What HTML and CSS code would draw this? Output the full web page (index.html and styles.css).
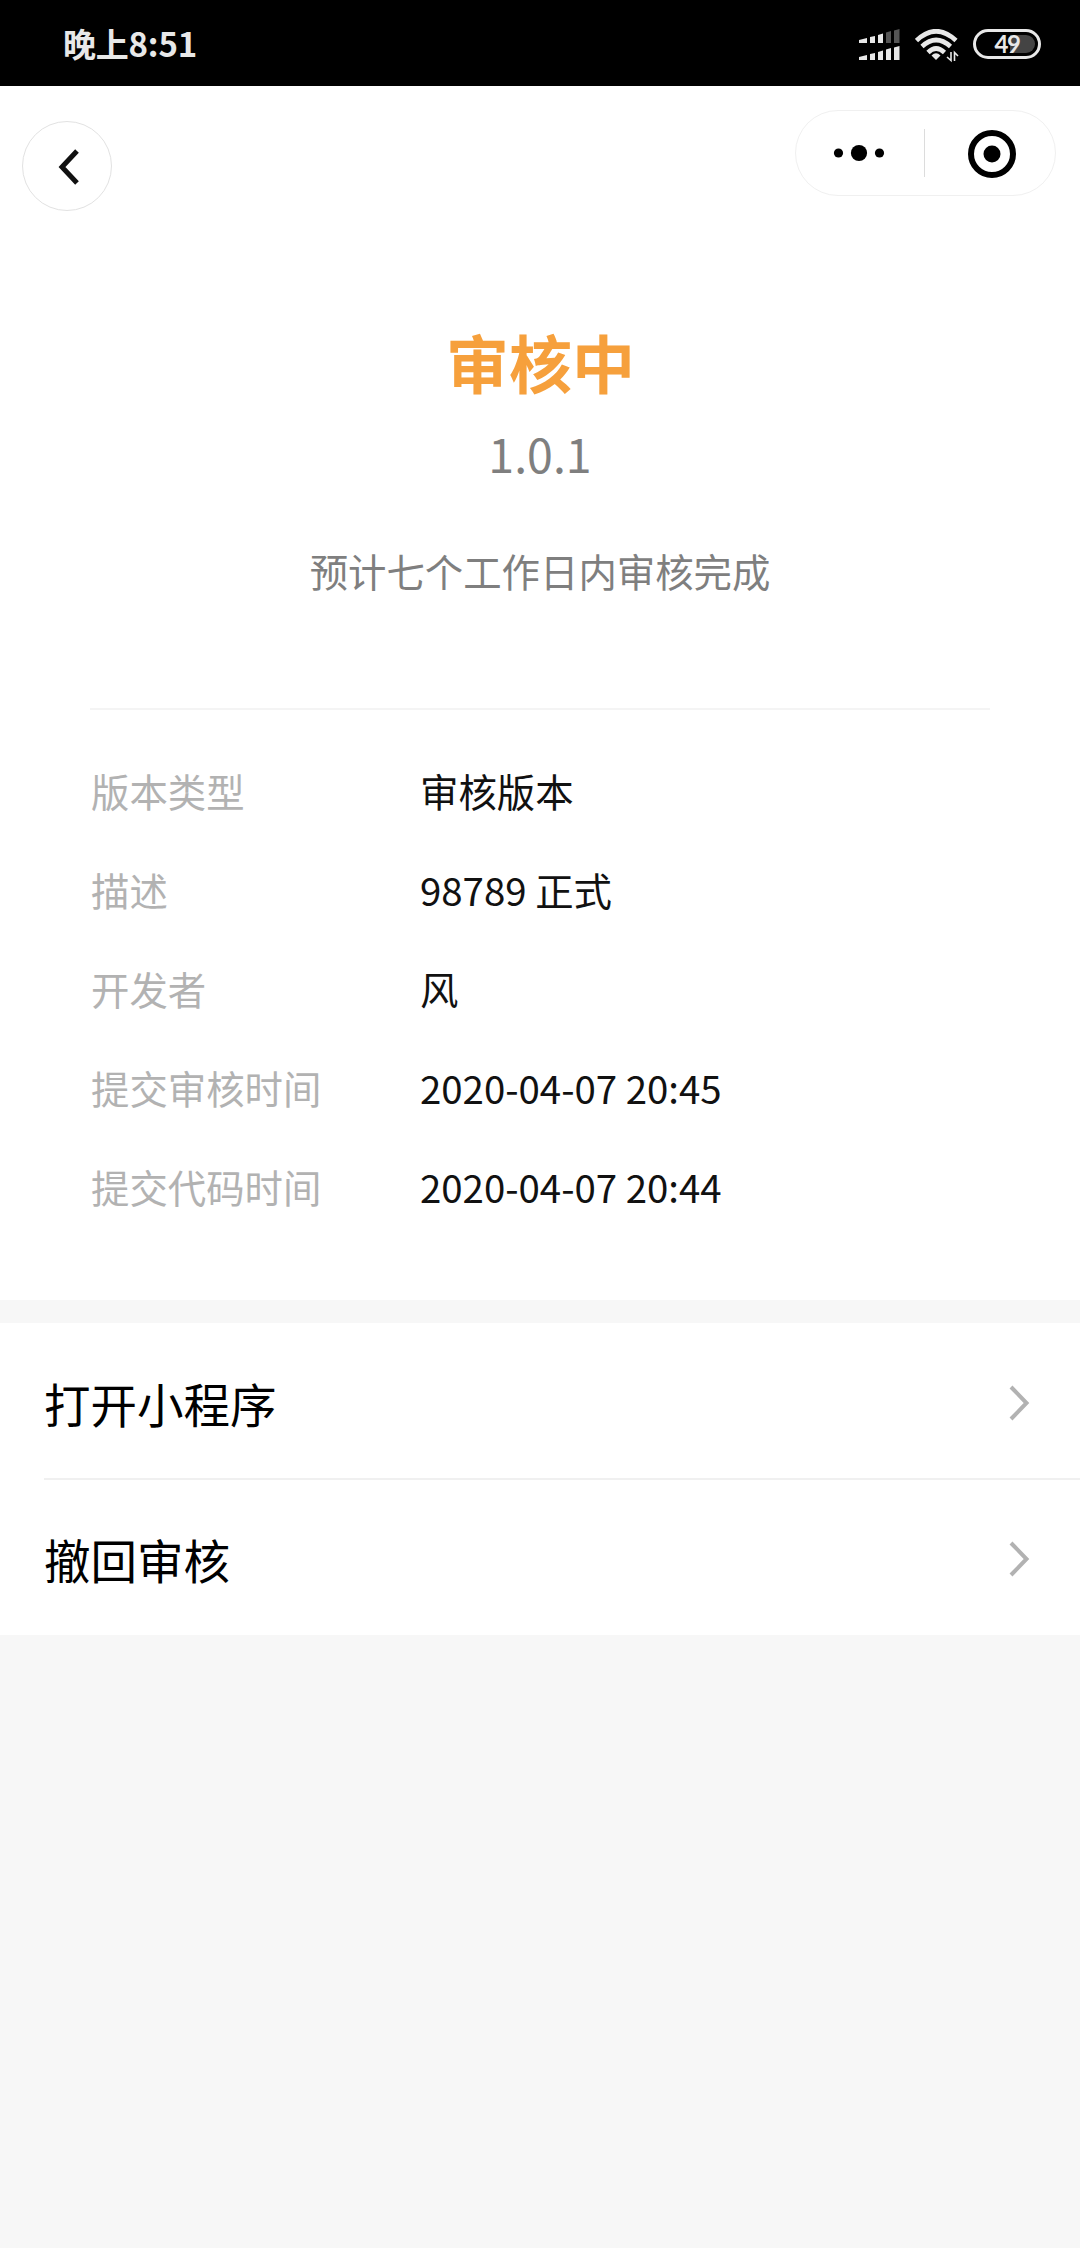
FILE: index.html
```html
<!DOCTYPE html>
<html lang="zh-CN">
<head>
  <meta charset="UTF-8" />
  <meta name="viewport" content="width=device-width, initial-scale=1.0"/>
  <title>审核中</title>
  <link rel="stylesheet" href="styles.css">
</head>
<body>
  <div class="status-bar">
    <div class="status-time">晚上8:51</div>
    <div class="status-icons">
      <svg class="signal" width="42" height="32" viewBox="0 0 42 32">
        <g fill="#e8e8e8">
          <path d="M0 11l8-2v5H0z"/>
          <path d="M11 8l5-1v7h-5z"/>
          <path d="M19 6l5-1.500v9.500h-5z"/>
        </g>
        <g fill="#555">
          <path d="M27 3.500l5-1.500v12h-5z"/>
          <path d="M35 1.500l5.500-1.500v14H35z"/>
        </g>
        <g fill="#e8e8e8">
          <path d="M0 28l8-2v5H0z"/>
          <path d="M11 25l5-1v7h-5z"/>
          <path d="M19 23l5-1.500v9.500h-5z"/>
          <path d="M27 20.500l5-1.500v12h-5z"/>
          <path d="M35 18.500l5.500-1.500v14H35z"/>
        </g>
      </svg>
      <svg class="wifi" width="44" height="34" viewBox="0 0 44 34">
        <g fill="none" stroke="#e8e8e8" stroke-width="4.600">
          <path d="M1.500 11.500Q21 -7 41 11.500"/>
          <path d="M7 17.500Q21 4.500 35.500 17.500"/>
          <path d="M13 23.500Q21 15.500 29.500 23.500"/>
        </g>
        <path d="M16.500 26.500Q21 22 25.500 26.500L21 31z" fill="#e8e8e8"/>
        <path d="M32 28l4 3.500V23M39.500 32v-8.500l3.500 3.500" fill="none" stroke="#e8e8e8" stroke-width="1.600"/>
      </svg>
      <div class="battery"><span>49</span></div>
    </div>
  </div>

  <div class="nav-bar">
    <div class="back">
      <svg width="22" height="38" viewBox="0 0 22 38">
        <path d="M19 3L4 19l15 16" fill="none" stroke="#111" stroke-width="5"/>
      </svg>
    </div>
    <div class="capsule">
      <div class="capsule-more">
        <svg width="52" height="18" viewBox="0 0 52 18">
          <circle cx="5.500" cy="9" r="4.600"/>
          <circle cx="26" cy="9" r="8.100"/>
          <circle cx="46.500" cy="9" r="4.600"/>
        </svg>
      </div>
      <div class="capsule-close">
        <svg width="48" height="48" viewBox="0 0 48 48">
          <circle cx="24" cy="24" r="21" fill="none" stroke="#000" stroke-width="6"/>
          <circle cx="24" cy="24" r="8.500"/>
        </svg>
      </div>
    </div>
  </div>

  <div class="summary">
    <h1>审核中</h1>
    <div class="version">1.0.1</div>
    <div class="tip">预计七个工作日内审核完成</div>
  </div>

  <div class="details">
    <div class="detail"><span class="label">版本类型</span><span>审核版本</span></div>
    <div class="detail"><span class="label">描述</span><span>98789 正式</span></div>
    <div class="detail"><span class="label">开发者</span><span>风</span></div>
    <div class="detail"><span class="label">提交审核时间</span><span>2020-04-07 20:45</span></div>
    <div class="detail"><span class="label">提交代码时间</span><span>2020-04-07 20:44</span></div>
  </div>

  <div class="actions">
    <div class="action">
      <span>打开小程序</span>
      <svg width="22" height="38" viewBox="0 0 22 38">
        <path d="M3 3L18.500 19 3 35" fill="none" stroke="#b2b2b2" stroke-width="4"/>
      </svg>
    </div>
    <div class="action">
      <span>撤回审核</span>
      <svg width="22" height="38" viewBox="0 0 22 38">
        <path d="M3 3L18.500 19 3 35" fill="none" stroke="#b2b2b2" stroke-width="4"/>
      </svg>
    </div>
  </div>
</body>
</html>
```
FILE: styles.css
```css
* {
  box-sizing: border-box;
}

body {
  margin: 0;
  min-height: 2248px;
  background: #f7f7f7;
  color: #111;
  font-family: "Noto Sans CJK SC", sans-serif;
}

svg {
  display: block;
}

/* status bar */
.status-bar {
  display: flex;
  justify-content: space-between;
  height: 86px;
  padding: 0 39px 0 63px;
  background: #000;
  color: #e8e8e8;
}

.status-time {
  font-size: 33px;
  font-weight: bold;
  line-height: 87px;
  letter-spacing: -0.2px;
}

.status-icons {
  display: flex;
  align-items: flex-start;
  padding-top: 29px;
}

.wifi {
  margin: 0 14px 0 14px;
}

.battery {
  width: 68px;
  height: 30px;
  border: 3px solid #e8e8e8;
  border-radius: 15px;
  padding: 3px;
}

.battery span {
  display: block;
  height: 18px;
  border-radius: 9px;
  background: linear-gradient(to right, #000 55%, #444 55%);
  font-family: Lato, sans-serif;
  font-size: 24px;
  font-weight: bold;
  line-height: 18px;
  letter-spacing: -1.5px;
  text-align: center;
}

/* mini program nav */
.nav-bar {
  display: flex;
  justify-content: space-between;
  align-items: flex-start;
  height: 224px;
  padding: 24px 24px 0 22px;
  background: #fff;
}

.back {
  display: flex;
  align-items: center;
  justify-content: center;
  width: 90px;
  height: 90px;
  margin-top: 11px;
  padding: 2px 0 0 4px;
  border: 1px solid #e2e2e2;
  border-radius: 50%;
}

.capsule {
  display: flex;
  align-items: center;
  width: 261px;
  height: 86px;
  border: 1px solid #f0f0f0;
  border-radius: 43px;
}

.capsule-more {
  display: flex;
  align-items: center;
  width: 129px;
  height: 48px;
  padding-left: 37px;
  border-right: 1px solid #dcdcdc;
}

.capsule-close {
  padding: 2px 0 0 43px;
}

/* review state */
.summary {
  height: 398px;
  background: #fff;
  text-align: center;
}

h1 {
  margin: 0;
  padding: 6px 0 0 1px;
  color: #f6a03c;
  font-size: 63px;
  font-weight: bold;
  line-height: 90px;
}

.version {
  color: #7f7f7f;
  font-size: 46.5px;
  line-height: 70px;
  margin-top: 12px;
}

.tip {
  color: #7f7f7f;
  font-size: 38.4px;
  line-height: 60px;
  margin-top: 52px;
}

.details {
  height: 592px;
  padding: 0 90px;
  background: #fff;
}

.details::before {
  content: "";
  display: block;
  height: 2px;
  margin-bottom: 31px;
  background: #f4f4f4;
}

.detail {
  display: flex;
  height: 99px;
  font-size: 38.4px;
  line-height: 99px;
}

.label {
  width: 330px;
  padding-left: 1px;
  color: #b2b2b2;
}

.actions {
  margin-top: 23px;
  padding-left: 44px;
  background: #fff;
}

.action {
  display: flex;
  align-items: center;
  justify-content: space-between;
  height: 155px;
  padding: 2px 50px 0 0;
  color: #000;
  font-size: 46.5px;
}

.action:first-child {
  height: 157px;
  padding-top: 4px;
  border-bottom: 2px solid #f0f0f0;
}
```
